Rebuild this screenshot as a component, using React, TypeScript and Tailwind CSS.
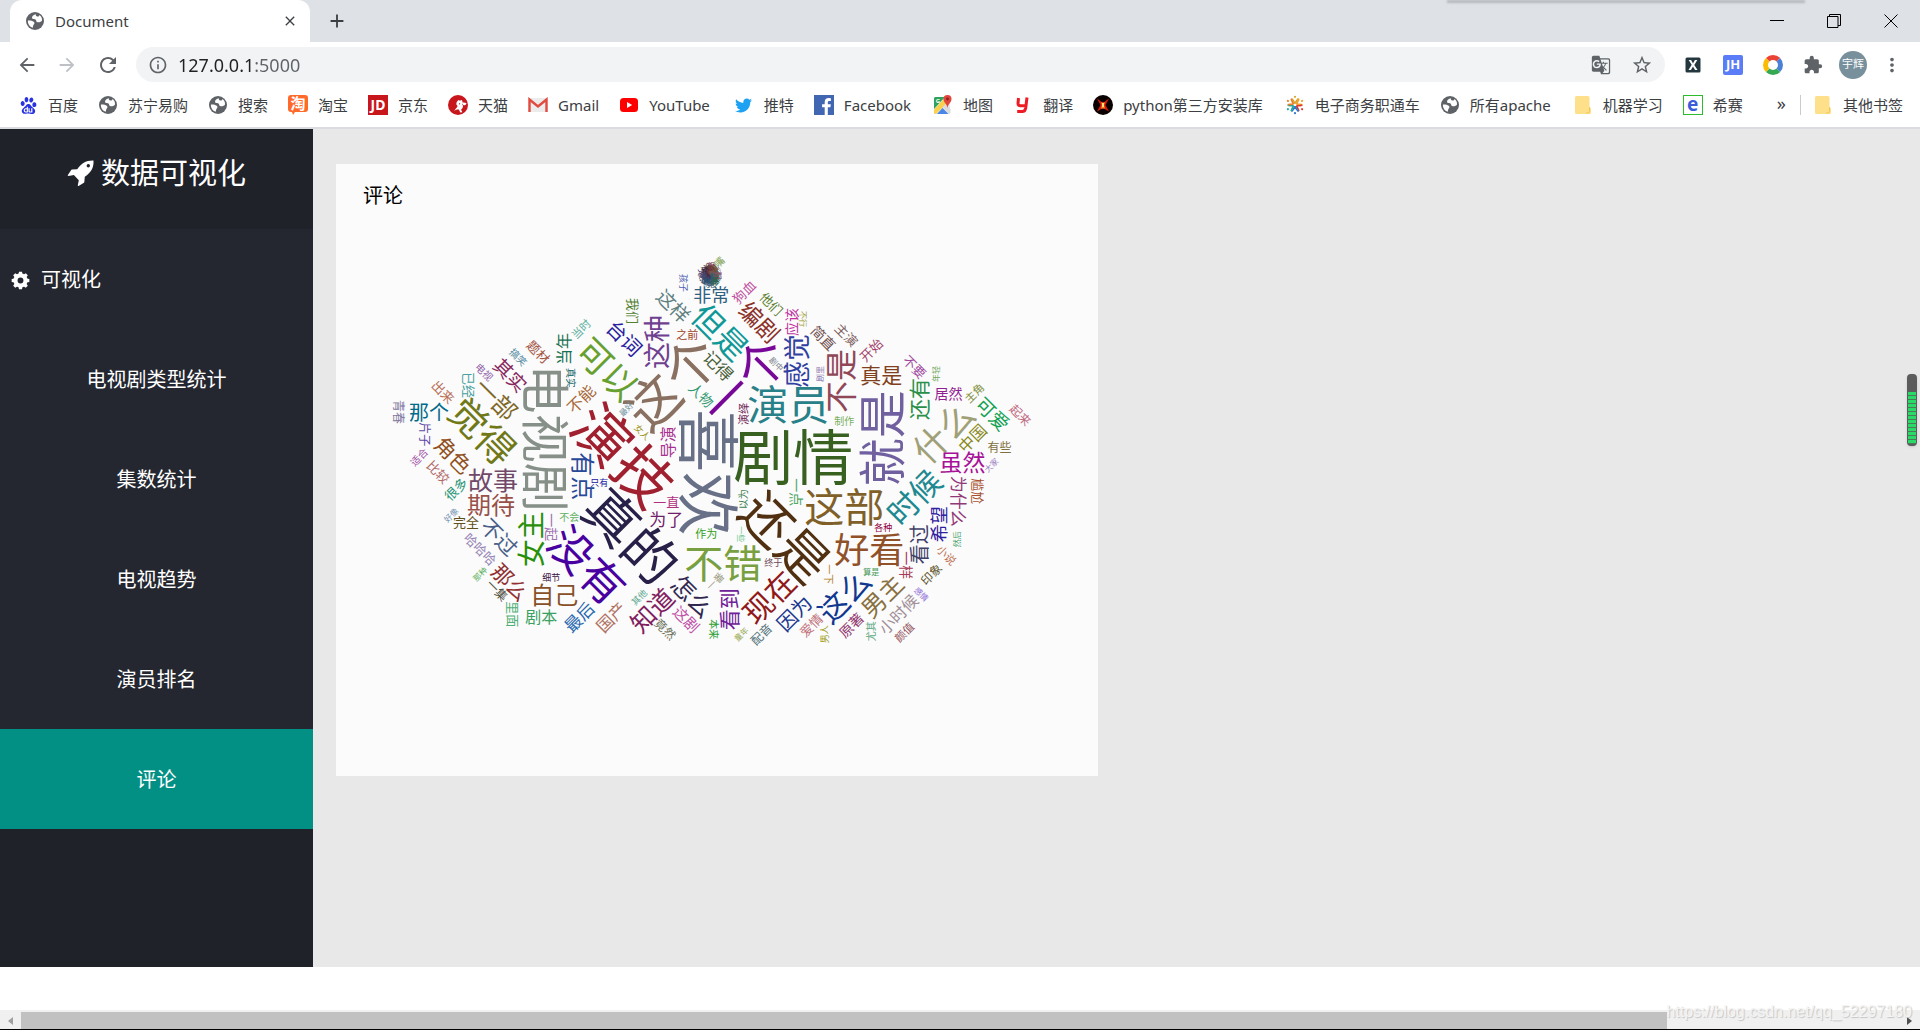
import React from "react";
import {
  MdArrowBack,
  MdArrowForward,
  MdClose,
  MdAdd,
  MdRefresh,
  MdInfoOutline,
  MdGTranslate,
  MdStarBorder,
  MdExtension,
  MdMoreVert,
} from "react-icons/md";
import { FaTwitter } from "react-icons/fa";
import { SiBaidu } from "react-icons/si";

const FONT = "font-['Noto_Sans','Noto_Sans_CJK_SC',sans-serif]";

type Word = [text: string, x: number, y: number, size: number, angle: number, color: string];

const WORDS: Word[] = [
  ["青春", 398, 412, 12, 90, "#8078a0"],
  ["那个", 429, 412, 20, 0, "#006a8a"],
  ["片子", 424, 434, 12, 90, "#6048a8"],
  ["出来", 443, 392, 13, 45, "#b87058"],
  ["已经", 469, 385, 13, 90, "#48a0a0"],
  ["电视", 484, 372, 10, 45, "#9060a8"],
  ["一部", 496, 399, 24, 45, "#80682a"],
  ["觉得", 482, 431, 38, 45, "#707818"],
  ["搞笑", 518, 357, 10, 45, "#5088a0"],
  ["题材", 538, 352, 13, 45, "#a05040"],
  ["其实", 510, 375, 19, 45, "#882860"],
  ["当年", 564, 349, 16, -90, "#187050"],
  ["当时", 581, 329, 11, -45, "#60b0a0"],
  ["可以", 607, 369, 35, 45, "#68a030"],
  ["台词", 624, 338, 20, 45, "#2820a0"],
  ["真实", 571, 378, 10, 90, "#206868"],
  ["不能", 581, 399, 16, -45, "#a86838"],
  ["电视剧", 545, 438, 49, 90, "#869088"],
  ["演技", 623, 455, 58, 45, "#a02030"],
  ["我们", 633, 311, 13, 90, "#508030"],
  ["孩子", 683, 283, 9, 90, "#5060b0"],
  ["这样", 673, 306, 19, 45, "#608080"],
  ["非常", 711, 295, 18, 0, "#306080"],
  ["嘴", 719, 262, 10, -45, "#80a050"],
  ["狗血", 744, 292, 13, -45, "#c050a0"],
  ["他们", 771, 304, 13, 45, "#608030"],
  ["编剧", 759, 322, 23, 45, "#8a3028"],
  ["应该", 791, 322, 14, -90, "#c030a0"],
  ["不行", 803, 319, 8, 90, "#a0a040"],
  ["简直", 823, 338, 14, 45, "#705050"],
  ["但是", 720, 332, 32, 45, "#109898"],
  ["这种", 657, 342, 27, -90, "#704090"],
  ["之前", 687, 335, 11, 0, "#a04028"],
  ["这个", 672, 383, 53, -45, "#8a7060"],
  ["记得", 718, 366, 17, 45, "#486038"],
  ["一个", 744, 381, 49, -45, "#780898"],
  ["感觉", 797, 361, 27, -90, "#3040a0"],
  ["剧中", 776, 364, 8, 45, "#788088"],
  ["剧里", 820, 374, 8, -90, "#8878b0"],
  ["人物", 701, 395, 14, 45, "#309870"],
  ["演员", 788, 404, 41, 0, "#288088"],
  ["演绎", 744, 414, 11, -90, "#702858"],
  ["最好", 626, 409, 8, -45, "#7090a0"],
  ["女人", 642, 432, 9, 45, "#a09828"],
  ["导演", 668, 442, 16, -90, "#a83090"],
  ["喜欢", 708, 472, 63, 90, "#687088"],
  ["剧情", 793, 457, 60, 0, "#386020"],
  ["制作", 844, 421, 10, 0, "#78b060"],
  ["不是", 841, 381, 32, -90, "#904858"],
  ["主演", 846, 335, 13, 45, "#806060"],
  ["开始", 871, 350, 13, -45, "#a04068"],
  ["真是", 881, 375, 21, 0, "#804020"],
  ["不要", 914, 367, 13, 45, "#a048a0"],
  ["年轻", 936, 374, 8, -90, "#70a860"],
  ["还有", 919, 399, 21, -90, "#289048"],
  ["居然", 948, 394, 14, 0, "#902090"],
  ["主角", 974, 393, 11, -45, "#809040"],
  ["可爱", 992, 414, 19, 45, "#10a050"],
  ["起来", 1020, 415, 12, 45, "#c06880"],
  ["就是", 882, 438, 48, -90, "#7060a0"],
  ["什么", 943, 432, 35, -45, "#a0a078"],
  ["中国", 972, 438, 16, -45, "#888820"],
  ["有些", 999, 447, 12, 0, "#807040"],
  ["虽然", 962, 462, 23, 0, "#a81098"],
  ["大家", 991, 465, 8, -45, "#9878c0"],
  ["为什么", 958, 501, 17, 90, "#903878"],
  ["尴尬", 977, 491, 13, 90, "#a85030"],
  ["时候", 914, 497, 31, -45, "#208890"],
  ["希望", 939, 524, 18, -90, "#3020a0"],
  ["各种", 883, 527, 9, 0, "#900040"],
  ["这部", 844, 507, 40, 0, "#806028"],
  ["好看", 869, 550, 35, 0, "#905028"],
  ["看过", 919, 544, 20, -90, "#404068"],
  ["一样", 906, 565, 14, 90, "#a83858"],
  ["然后", 957, 539, 8, -90, "#40a068"],
  ["小说", 946, 555, 11, 45, "#c07050"],
  ["印象", 931, 574, 12, -45, "#605830"],
  ["算是", 871, 572, 8, 0, "#489858"],
  ["一下", 828, 574, 10, 90, "#b08020"],
  ["男主", 882, 596, 24, -45, "#887040"],
  ["这么", 844, 596, 30, -45, "#103890"],
  ["感情", 921, 594, 8, 45, "#9070d8"],
  ["小时候", 898, 614, 16, -45, "#a09098"],
  ["原著", 851, 625, 14, -45, "#903870"],
  ["尤其", 871, 631, 10, -90, "#60a880"],
  ["颜值", 904, 632, 11, -45, "#905058"],
  ["男人", 824, 634, 9, -90, "#a0a020"],
  ["一直", 666, 502, 13, 0, "#b03080"],
  ["为了", 666, 519, 17, 0, "#702068"],
  ["真的", 631, 536, 54, 45, "#282048"],
  ["作为", 706, 534, 11, 0, "#30a020"],
  ["以为", 743, 499, 10, -90, "#408050"],
  ["一点", 796, 492, 14, 90, "#50a868"],
  ["一些", 741, 534, 8, 90, "#70c890"],
  ["还是", 785, 537, 51, 45, "#503010"],
  ["不错", 723, 563, 39, 0, "#78a040"],
  ["终于", 773, 562, 9, 0, "#704858"],
  ["一番", 715, 581, 10, -45, "#a0a088"],
  ["怎么", 692, 596, 24, 45, "#302850"],
  ["看到", 729, 609, 21, -90, "#702098"],
  ["现在", 769, 597, 30, -45, "#901818"],
  ["因为", 794, 613, 20, -45, "#203890"],
  ["爱情", 811, 625, 13, -45, "#c07078"],
  ["国产", 611, 617, 17, -45, "#b07060"],
  ["其他", 639, 597, 9, -45, "#60a890"],
  ["知道", 652, 610, 25, -45, "#802060"],
  ["竟然", 665, 629, 12, 45, "#687058"],
  ["这剧", 686, 619, 15, 45, "#c050a8"],
  ["本来", 714, 629, 10, 90, "#30a038"],
  ["童年", 741, 634, 8, -45, "#98a850"],
  ["配音", 761, 634, 12, -45, "#507078"],
  ["角色", 453, 455, 21, 45, "#905020"],
  ["适合", 419, 457, 10, -45, "#a050a8"],
  ["比较", 438, 472, 13, 45, "#b06868"],
  ["很多", 456, 489, 13, -45, "#209070"],
  ["故事", 493, 480, 25, 0, "#704868"],
  ["期待", 491, 505, 24, 0, "#985048"],
  ["好像", 451, 515, 8, -45, "#7090b0"],
  ["完全", 466, 522, 13, 0, "#605020"],
  ["不过", 499, 537, 21, 45, "#486088"],
  ["哈哈哈", 480, 549, 13, 45, "#9888b8"],
  ["那种", 480, 574, 8, -45, "#60b060"],
  ["一集", 497, 590, 12, 45, "#505040"],
  ["那么", 510, 582, 21, 45, "#903030"],
  ["里面", 513, 614, 13, 90, "#50b078"],
  ["剧本", 541, 617, 16, 0, "#38a060"],
  ["自己", 554, 595, 24, 0, "#885028"],
  ["细节", 551, 577, 9, 0, "#401040"],
  ["女主", 531, 539, 28, -90, "#289008"],
  ["一起", 551, 527, 14, 90, "#a070b0"],
  ["不会", 569, 517, 10, 0, "#60b060"],
  ["有点", 583, 476, 24, 90, "#284898"],
  ["只有", 599, 482, 9, 0, "#1818a0"],
  ["没有", 587, 565, 44, 45, "#4800a0"],
  ["最后", 579, 617, 17, -45, "#2868b0"],
];

const CLUSTER_COLORS = ["#285070", "#6a3048", "#306048", "#484878", "#705028", "#38607a", "#2a2a40", "#8a5060"];
const CLUSTER: Word[] = Array.from({ length: 60 }, (_, i) => {
  const t = i * 2.4;
  const r = Math.sqrt(i / 60) * 8;
  return [
    WORDS[(i * 2) % WORDS.length][0].slice(0, 1),
    710 + Math.cos(t) * r,
    275 + Math.sin(t) * r * 1.15,
    8,
    [-45, 0, 45, 90][i % 4],
    CLUSTER_COLORS[i % 8],
  ] as Word;
});

function WordCloud() {
  return (
    <svg viewBox="336 227 761 549" className="block h-auto w-full" role="img" aria-label="评论">
      {[...WORDS, ...CLUSTER].map(([text, x, y, size, angle, color], i) => (
        <text
          key={i}
          transform={`translate(${x} ${y}) rotate(${angle})`}
          y={size * 0.375}
          textAnchor="middle"
          fontSize={size}
          fill={color}
          className="font-['Noto_Sans_CJK_SC',sans-serif]"
        >
          {text}
        </text>
      ))}
    </svg>
  );
}

function Globe() {
  return (
    <svg viewBox="0 0 18 18" className="size-[18px]">
      <circle cx="9" cy="9" r="9" fill="#5f6368" />
      <path
        d="M9.800 2.200C7.900 3 6 3.600 6 5.600c0 1.700 1.600 1.400 3 1.700 1.500.4.8 2.300 2 2.800 1.700.5 4.300 0 5-1.600.3-2.300-.9-4.400-2.600-5.500-.1 1.200-1 1.700-2 1.500-1.200-.2-1.800-1.300-1.600-2.300z"
        fill="#fff"
      />
      <path
        d="M1.900 8.600c1.900-.2 4.400.1 5.800 1.200 1.300 1.100.7 2-.1 2.900-.7.800-.5 2-.9 3.100C3.600 14.800 1.700 12 1.900 8.600z"
        fill="#fff"
      />
    </svg>
  );
}

function Folder() {
  return (
    <svg viewBox="0 0 16 18" className="h-[18px] w-4">
      <path
        d="M1.500 0h11.500a1.500 1.500 0 0 1 1.500 1.500V11l1.500 1.500V16.500a1.500 1.500 0 0 1-1.500 1.500h-13A1.500 1.500 0 0 1 0 16.500v-15A1.500 1.500 0 0 1 1.500 0z"
        fill="#ffe08a"
      />
      <path d="M14.500 11v4.500a1.500 1.500 0 0 1-1.500 1.500h-2" fill="none" stroke="#f0c75a" />
    </svg>
  );
}

function Taobao() {
  return (
    <svg viewBox="0 0 20 20" className="size-5">
      <path
        d="M3 0h14a3 3 0 0 1 3 3v11a3 3 0 0 1-3 3H7l-2 3-1-3H3a3 3 0 0 1-3-3V3a3 3 0 0 1 3-3z"
        fill="#ff6a2b"
      />
      <text x="10" y="14" textAnchor="middle" fontSize="15" fontWeight="bold" fill="#fff">
        淘
      </text>
    </svg>
  );
}

function Tmall() {
  return (
    <svg viewBox="0 0 20 20" className="size-5">
      <circle cx="10" cy="10" r="10" fill="#c8161d" />
      <path
        d="M10.500 5c1.200.7 2.200.7 3.500.1l.6 2.400c1.600-.3 2.700 0 4 .9-.9 1.600-2 2.100-3.800 1.700.6 1.700-.1 3.400-1.700 4.600l1.200 2.500-2 .3-1.500-3c-1.300-.3-3 .2-4.600 1.300C7 14.300 8.500 13 9.200 12c.6-1 .2-1.700-.8-2.200-.3-2 .5-3.600 2.100-4.800z"
        fill="#fff"
      />
      <path d="M11 8l1.500.7-1.200 1.100zM14.200 8.800l1.100.3-.8 1.200z" fill="#c8161d" />
    </svg>
  );
}

function Gmail() {
  return (
    <svg viewBox="0 0 20 16" className="h-4 w-5">
      <path d="M1.500 1h17a1 1 0 0 1 1 1v12a1 1 0 0 1-1 1h-17a1 1 0 0 1-1-1V2a1 1 0 0 1 1-1z" fill="#ececec" />
      <path d="M1.500 15V2.500l8.500 7 8.500-7V15" fill="none" stroke="#e04a3f" strokeWidth="2.400" />
    </svg>
  );
}

function YouTube() {
  return (
    <svg viewBox="0 0 20 14" className="h-3.5 w-5">
      <rect x="1" width="18" height="14" rx="3.500" fill="#f00" />
      <path d="M8 4l5.200 3L8 10z" fill="#fff" />
    </svg>
  );
}

function Facebook() {
  return (
    <svg viewBox="0 0 20 20" className="size-5">
      <rect width="20" height="20" fill="#4267b2" />
      <path
        d="M13.800 20v-7.700h2.600l.4-3h-3V7.400c0-.9.300-1.500 1.500-1.500h1.600V3.200a21 21 0 0 0-2.300-.1c-2.300 0-3.900 1.400-3.900 4v2.200H8.100v3h2.600V20z"
        fill="#fff"
      />
    </svg>
  );
}

function Maps() {
  return (
    <svg viewBox="0 0 20 20" className="size-5">
      <rect x="1" y="2" width="16" height="17" rx="1.500" fill="#e8e8e8" />
      <path d="M2.500 2H12L1 14V3.500A1.500 1.500 0 0 1 2.500 2z" fill="#2fa35b" />
      <path d="M1 14.500 12 3l2 5L3 19H2.500A1.500 1.500 0 0 1 1 17.500z" fill="#fbd04b" />
      <path d="M4 19l5.500-6 6 6z" fill="#4a86e8" />
      <path d="M9.500 12l3-3 5 5v3.500L16 19z" fill="#dcdcdc" />
      <text x="5" y="8" textAnchor="middle" fontSize="6" fontWeight="bold" fill="#fff">
        G
      </text>
      <path d="M14.500 0a4 4 0 0 1 4 4c0 3.500-3.300 4.500-4 9-.7-4.500-4-5.500-4-9a4 4 0 0 1 4-4z" fill="#e2453c" />
      <circle cx="14.500" cy="4" r="1.400" fill="#8c1f1a" />
    </svg>
  );
}

function Youdao() {
  return (
    <svg viewBox="0 0 20 20" className="size-5">
      <path
        d="M5.500 3 5 8.500c0 1.500 1 2.200 2.500 2.200h4.500M14 2.500 12.700 13c-.4 2.500-1.500 3.600-3.500 3.600H4.200"
        fill="none"
        stroke="#ee1c25"
        strokeWidth="3"
      />
    </svg>
  );
}

function PyLibs() {
  return (
    <svg viewBox="0 0 20 20" className="size-5">
      <circle cx="10" cy="10" r="10" fill="#0a0000" />
      <path d="M4 3.500 10 8l6-4.500-3.500 6.500L16 16.500 10 13l-6 3.500L7.500 10z" fill="#d81a0c" />
      <path d="M8 7.500h4L11 10l1 3.500H8L9 10z" fill="#ff8a1e" />
      <rect x="9" y="8" width="2" height="4" fill="#ffe27a" />
    </svg>
  );
}

function Train() {
  const arms = ["#d8a62a", "#f0a02c", "#dd3a2a", "#2f78cf", "#22a79a", "#e87f2e"];
  return (
    <svg viewBox="0 0 20 20" className="size-5">
      {arms.map((c, i) => (
        <g key={i} transform={`rotate(${i * 60} 10 10)`} stroke={c} fill={c}>
          <path d="M10 8.500 8.200 5.500 6.500 3.500M10 8.500l1.800-3 1.700-2" fill="none" strokeWidth="1.700" />
          <circle cx="10" cy="1.800" r="1.100" stroke="none" />
        </g>
      ))}
    </svg>
  );
}

function Rocket() {
  return (
    <svg viewBox="0 0 27 27" className="size-[27px]" fill="currentColor">
      <path
        fillRule="evenodd"
        d="M26.500.4c.4 8-2.700 12-8.700 16.300l-.5 5.300a1 1 0 0 1-.4.700l-5.300 3.200c-.5.300-1 0-.8-.600l1-5.100-4.900-5.100-5.300.9c-.6.100-1-.4-.7-.9l3.300-5.200a1 1 0 0 1 .7-.4l5.300-.300C14.500 3 18.600.2 26.500.4zM21.300 4a1.700 1.700 0 1 0 0 3.400 1.700 1.700 0 0 0 0-3.400z"
      />
    </svg>
  );
}

function Gear() {
  return (
    <svg viewBox="0 0 20 20" className="size-[19px]">
      <circle cx="10" cy="10" r="5.300" fill="none" stroke="currentColor" strokeWidth="4.400" />
      {[0, 45, 90, 135, 180, 225, 270, 315].map((a) => (
        <path key={a} d="M7.900 4 8.400.7h3.200l.5 3.300z" fill="currentColor" transform={`rotate(${a} 10 10)`} />
      ))}
    </svg>
  );
}

function Square({ children, className }: { children: React.ReactNode; className: string }) {
  return (
    <span className={`flex size-5 items-center justify-center leading-none font-bold ${className}`}>{children}</span>
  );
}

const BOOKMARKS: { label: string; icon: React.ReactNode; pad?: string }[] = [
  { label: "百度", icon: <SiBaidu className="size-[17px] text-[#2932e1]" /> },
  { label: "苏宁易购", icon: <Globe /> },
  { label: "搜索", icon: <Globe /> },
  { label: "淘宝", icon: <Taobao /> },
  { label: "京东", icon: <Square className="bg-[#c8161d] text-sm text-white">JD</Square> },
  { label: "天猫", icon: <Tmall /> },
  { label: "Gmail", icon: <Gmail /> },
  { label: "YouTube", icon: <YouTube />, pad: "pr-1" },
  { label: "推特", icon: <FaTwitter className="size-[17px] text-[#1da1f2]" /> },
  { label: "Facebook", icon: <Facebook />, pad: "pr-0.5" },
  { label: "地图", icon: <Maps /> },
  { label: "翻译", icon: <Youdao /> },
  { label: "python第三方安装库", icon: <PyLibs />, pad: "pr-0.5" },
  { label: "电子商务职通车", icon: <Train /> },
  { label: "所有apache", icon: <Globe />, pad: "pr-0.5" },
  { label: "机器学习", icon: <Folder /> },
  {
    label: "希赛",
    icon: <Square className="border border-[#2bbd2b] pb-0.5 text-[19px] text-[#3b5bdb]">e</Square>,
  },
];

function Bookmark({ label, icon, pad = "" }: { label: string; icon: React.ReactNode; pad?: string }) {
  return (
    <a href="#" className={`flex shrink-0 items-center gap-2.5 ${pad}`}>
      <span className="flex size-5 items-center justify-center">{icon}</span>
      <span>{label}</span>
    </a>
  );
}

function TabStrip() {
  return (
    <div className="relative flex h-[42px] bg-[#dee1e6]">
      <div className="absolute top-0 right-[115px] h-[3px] w-[358px] bg-[#b4b7bc] blur-[1px]" />
      <div className="ml-2.5 flex w-[300px] items-center rounded-t-xl bg-white pr-3 pl-4">
        <Globe />
        <span className="ml-[11px] flex-1 text-[15px] text-[#3c4043]">Document</span>
        <button aria-label="Close tab">
          <MdClose className="size-4 text-[#3c4043]" />
        </button>
      </div>
      <button aria-label="New tab" className="ml-4">
        <MdAdd className="size-[22px] text-[#3c4043]" />
      </button>
      <div className="ml-auto flex items-center text-black">
        <button aria-label="Minimize" className="flex w-[57px] justify-center">
          <svg viewBox="0 0 14 14" className="size-3.5">
            <path d="M0 6.500h14" stroke="currentColor" />
          </svg>
        </button>
        <button aria-label="Restore" className="flex w-[57px] justify-center">
          <svg viewBox="0 0 14 14" className="size-3.5">
            <path d="M.5 2.500h10.500v11H.5zM2.500 2.500v-2h11v11H11" fill="none" stroke="currentColor" />
          </svg>
        </button>
        <button aria-label="Close" className="flex w-[58px] justify-center">
          <svg viewBox="0 0 14 14" className="size-3.5">
            <path d="M.5.5l13 13M13.500.5l-13 13" stroke="currentColor" />
          </svg>
        </button>
      </div>
    </div>
  );
}

function Toolbar() {
  return (
    <div className="flex h-[45px] items-center pr-[17px] pl-4 text-[#5f6368]">
      <button aria-label="Back">
        <MdArrowBack className="size-[22px]" />
      </button>
      <button aria-label="Forward" className="ml-[18px] text-[#bdc1c6]">
        <MdArrowForward className="size-[22px]" />
      </button>
      <button aria-label="Reload" className="ml-[18px]">
        <MdRefresh className="size-6" />
      </button>
      <label className="ml-4 flex h-[35px] flex-1 items-center rounded-full bg-[#f1f3f4] pr-3 pl-3">
        <MdInfoOutline className="size-5" />
        <input
          aria-label="Address"
          defaultValue="127.0.0.1:5000"
          className="ml-2.5 h-full flex-1 bg-[linear-gradient(to_right,#202124_74px,#5f6368_74px)] bg-clip-text text-lg text-transparent caret-black outline-none"
        />
        <MdGTranslate className="size-5" />
        <MdStarBorder className="ml-5 size-[22px]" />
      </label>
      <div className="ml-[18px] flex items-center gap-5">
        <Square className="scale-75 rounded-xs bg-[#24363e] text-lg text-white">X</Square>
        <Square className="rounded-xs bg-[#5b7cf7] text-[13px] text-white">JH</Square>
        <svg viewBox="0 0 20 20" className="size-5">
          <g fill="none" strokeWidth="5">
            <path d="M4.700 4.700A7.500 7.500 0 0 1 15.300 4.700" stroke="#ea4335" />
            <path d="M15.300 4.700A7.500 7.500 0 0 1 15.300 15.300" stroke="#4a80d8" />
            <path d="M15.300 15.300A7.500 7.500 0 0 1 4.700 15.300" stroke="#34a853" />
            <path d="M4.700 15.300A7.500 7.500 0 0 1 4.700 4.700" stroke="#fbbc05" />
          </g>
        </svg>
        <MdExtension className="size-5" />
      </div>
      <span className="ml-4 flex size-7 items-center justify-center rounded-full bg-[#78909c] text-[11px] text-white">
        宇辉
      </span>
      <button aria-label="Menu" className="ml-3.5">
        <MdMoreVert className="size-[22px]" />
      </button>
    </div>
  );
}

function BookmarkBar() {
  return (
    <nav className="flex h-10 items-center gap-5 overflow-hidden pr-[17px] pb-1 pl-[18px] text-[15px] text-[#3c4043]">
      {BOOKMARKS.map((b) => (
        <Bookmark key={b.label} {...b} />
      ))}
      <button aria-label="More bookmarks" className="ml-auto pb-1 text-lg leading-none">
        »
      </button>
      <span className="-ml-1.5 h-5 w-px bg-[#c8cbd0]" />
      <div className="-ml-2">
        <Bookmark label="其他书签" icon={<Folder />} />
      </div>
    </nav>
  );
}

const NAV = ["电视剧类型统计", "集数统计", "电视趋势", "演员排名", "评论"];

function Sidebar() {
  return (
    <aside className="w-[313px] shrink-0 bg-[#20222a] text-xl text-white">
      <h1 className="flex h-[100px] items-center justify-center gap-[7px] pb-3 text-[29px]">
        <Rocket />
        数据可视化
      </h1>
      <div className="flex h-[100px] items-center gap-[11px] bg-[#24272f] pt-0.5 pl-[11px]">
        <Gear />
        可视化
      </div>
      <ul className="bg-[#24272f]">
        {NAV.map((item) => (
          <li key={item}>
            <a
              href="#"
              className={
                item === "评论"
                  ? "flex h-[100px] items-center justify-center bg-[#029085] pt-0.5"
                  : "flex h-[100px] items-center justify-center pt-0.5"
              }
            >
              {item}
            </a>
          </li>
        ))}
      </ul>
    </aside>
  );
}

export default function App() {
  return (
    <div className={`relative flex min-h-screen flex-col overflow-hidden bg-white ${FONT}`}>
      <header className="border-b-2 border-[#dadce0]">
        <TabStrip />
        <Toolbar />
        <BookmarkBar />
      </header>
      <div className="flex flex-1 bg-[#e8e8e8]">
        <Sidebar />
        <main className="grid flex-1 grid-cols-2 items-start gap-[38px] px-[23px] pt-[35px]">
          <section className="bg-[#fbfbfb]">
            <h2 className="flex h-[63px] items-center pl-[27px] text-xl text-black">评论</h2>
            <WordCloud />
          </section>
        </main>
      </div>
      <div className="h-[43px] bg-white" />
      <div className="flex h-5 items-center justify-between border-b border-black bg-[#f0f0f0] pt-0.5">
        <span className="ml-2 border-y-4 border-r-[5px] border-y-transparent border-r-[#a0a0a0]" />
        <span className="mr-[240px] ml-2 h-full flex-1 bg-[#c1c1c1]" />
        <span className="mr-2 border-y-4 border-l-[5px] border-y-transparent border-l-[#505050]" />
      </div>
      <span className="absolute right-2 bottom-1.5 font-['Liberation_Sans',sans-serif] text-base text-[#f4f4f4] [text-shadow:1px_1px_1px_#c4c4c4]">
        https://blog.csdn.net/qq_52297180
      </span>
      <div className="absolute top-[374px] right-[3px] h-[72px] w-2.5 overflow-hidden rounded bg-[#5c5c5c] px-px pt-[18px] pb-0.5 shadow">
        <div className="h-full bg-[repeating-linear-gradient(to_bottom,#2bd968_0px,#2bd968_3px,#4b7a58_3px,#4b7a58_4px)]" />
      </div>
    </div>
  );
}
